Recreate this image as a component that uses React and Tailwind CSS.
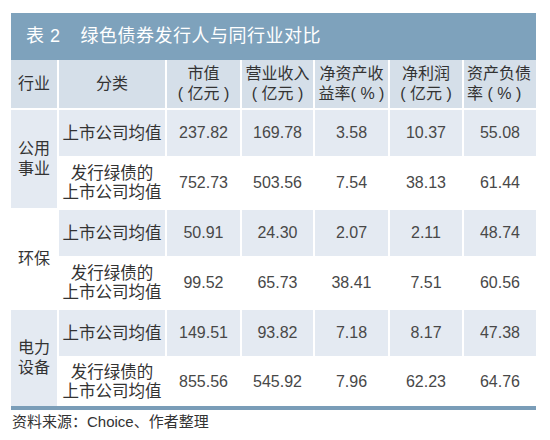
const FONT = { fontFamily: '"Liberation Sans", "Noto Sans CJK SC", sans-serif' };

const groups = [
  {
    name: ["公用", "事业"],
    shaded: true,
    rows: [
      ["237.82", "169.78", "3.58", "10.37", "55.08"],
      ["752.73", "503.56", "7.54", "38.13", "61.44"],
    ],
  },
  {
    name: ["环保"],
    shaded: false,
    rows: [
      ["50.91", "24.30", "2.07", "2.11", "48.74"],
      ["99.52", "65.73", "38.41", "7.51", "60.56"],
    ],
  },
  {
    name: ["电力", "设备"],
    shaded: true,
    rows: [
      ["149.51", "93.82", "7.18", "8.17", "47.38"],
      ["855.56", "545.92", "7.96", "62.23", "64.76"],
    ],
  },
];

function Head({ children, left = false }) {
  return (
    <div
      className={
        "bg-[#d5dfe9] flex flex-col justify-center text-[16px] leading-[20px] text-[#333] whitespace-pre " +
        (left ? "items-start pl-[3px]" : "items-center")
      }
    >
      {children}
    </div>
  );
}

export default function App() {
  return (
    <div className="w-[550px] h-[440px] bg-white pt-[13px] pl-[11px]" style={FONT}>
      <div className="w-[525px] h-[47px] bg-[#7ea2bc] flex items-center pl-[15px] text-white text-[18px] tracking-[0.5px]">
        <span>表 2</span>
        <span className="ml-[20px]">绿色债券发行人与同行业对比</span>
      </div>

      <div className="w-[525px] grid grid-cols-[46px_106px_73px_71px_73px_72px_72px] grid-rows-[48px_46px_50px_46px_50px_46px_48px] gap-[2px] bg-white">
        <Head>行业</Head>
        <Head>分类</Head>
        <Head>
          <span>市值</span>
          <span>( 亿元 )</span>
        </Head>
        <Head>
          <span>营业收入</span>
          <span>( 亿元 )</span>
        </Head>
        <Head>
          <span>净资产收</span>
          <span>益率( % )</span>
        </Head>
        <Head>
          <span>净利润</span>
          <span>( 亿元 )</span>
        </Head>
        <Head left>
          <span>资产负债</span>
          <span>率 ( % )</span>
        </Head>

        {groups.map((g) => (
          <Group key={g.name.join("")} group={g} />
        ))}
      </div>

      <div className="w-[525px] h-[4px] bg-[#7a9db8]" />
      <div className="mt-[2px] pl-[1px] text-[15px] leading-[20px] text-[#333]">
        资料来源：Choice、作者整理
      </div>
    </div>
  );
}

function Group({ group }) {
  const [first, second] = group.rows;
  return (
    <>
      <div
        className={
          "row-span-2 flex flex-col items-center justify-center text-[16px] leading-[20px] text-[#333] " +
          (group.shaded ? "bg-[#e4eaf2]" : "bg-white")
        }
      >
        {group.name.map((n) => (
          <span key={n}>{n}</span>
        ))}
      </div>
      <div className="bg-[#e4eaf2] flex items-center justify-center text-[16.5px] text-[#333]">
        上市公司均值
      </div>
      {first.map((v, i) => (
        <div
          key={i}
          className="bg-[#e4eaf2] flex items-center justify-center text-[16px] text-[#484848]"
        >
          {v}
        </div>
      ))}
      <div className="bg-white flex flex-col items-center justify-center text-[16.5px] leading-[19px] text-[#333]">
        <span>发行绿债的</span>
        <span>上市公司均值</span>
      </div>
      {second.map((v, i) => (
        <div
          key={i}
          className="bg-white flex items-center justify-center text-[16px] text-[#484848]"
        >
          {v}
        </div>
      ))}
    </>
  );
}
